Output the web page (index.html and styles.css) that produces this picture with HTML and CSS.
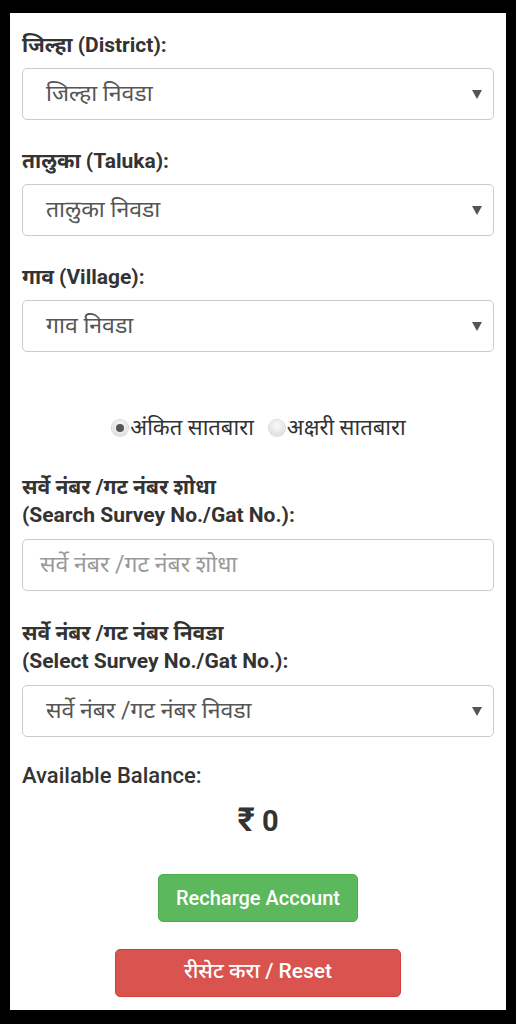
FILE: index.html
```html
<!DOCTYPE html>
<html lang="mr">
<head>
<meta charset="utf-8">
<title>सातबारा</title>
<link rel="stylesheet" href="styles.css">
</head>
<body>
<div class="panel">
  <div class="group">
    <label class="label">जिल्हा (District):</label>
    <div class="select"><span>जिल्हा निवडा</span><span class="arrow"></span></div>
  </div>
  <div class="group">
    <label class="label">तालुका (Taluka):</label>
    <div class="select"><span>तालुका निवडा</span><span class="arrow"></span></div>
  </div>
  <div class="group">
    <label class="label">गाव (Village):</label>
    <div class="select"><span>गाव निवडा</span><span class="arrow"></span></div>
  </div>

  <div class="radios">
    <span class="radio-item"><span class="radio checked"></span>अंकित सातबारा</span>
    <span class="radio-item"><span class="radio"></span>अक्षरी सातबारा</span>
  </div>

  <div class="group">
    <label class="label label-multi">सर्वे नंबर /गट नंबर शोधा<br>(Search Survey No./Gat No.):</label>
    <div class="input"><span class="placeholder">सर्वे नंबर /गट नंबर शोधा</span></div>
  </div>
  <div class="group group-last">
    <label class="label label-multi">सर्वे नंबर /गट नंबर निवडा<br>(Select Survey No./Gat No.):</label>
    <div class="select"><span>सर्वे नंबर /गट नंबर निवडा</span><span class="arrow"></span></div>
  </div>

  <div class="balance-label">Available Balance:</div>
  <div class="balance"><span class="rupee">₹</span> 0</div>

  <div class="actions">
    <button class="btn btn-green">Recharge Account</button>
    <button class="btn btn-red">रीसेट करा / Reset</button>
  </div>
</div>
</body>
</html>
```

FILE: styles.css
```css
html, body {
  margin: 0;
  padding: 0;
  background: #000;
}
body {
  padding: 13px 10px 14px 10px;
  font-family: Roboto, "Noto Sans Devanagari", "Noto Sans", sans-serif;
  color: #333;
}
.panel {
  background: #fff;
  height: 997px;
  box-sizing: border-box;
  padding: 19px 12px 0 12px;
}
.group {
  margin-bottom: 28px;
}
.group-last {
  margin-bottom: 26px;
}
.label {
  display: block;
  font-size: 21px;
  font-weight: 700;
  line-height: 26px;
  margin-bottom: 10px;
  color: #333;
}
.label-multi {
  line-height: 28px;
}
.select, .input {
  height: 52px;
  box-sizing: border-box;
  border: 1px solid #ccc;
  border-radius: 5px;
  display: flex;
  align-items: center;
  font-size: 23px;
  line-height: 30px;
  color: #555;
  background: #fff;
}
.select {
  padding: 0 11px 0 23px;
  justify-content: space-between;
}
.input {
  padding: 0 17px;
}
.placeholder {
  color: #999;
}
.arrow {
  width: 0;
  height: 0;
  border-left: 5px solid transparent;
  border-right: 5px solid transparent;
  border-top: 9px solid #555;
}
.radios {
  margin-top: -28px;
  padding-top: 63px;
  margin-bottom: 32px;
  display: flex;
  justify-content: center;
  gap: 15px;
  font-size: 22px;
  line-height: 26px;
  color: #333;
  padding-left: 2px;
}
.radio-item {
  display: inline-flex;
  align-items: center;
}
.radio {
  width: 16px;
  height: 16px;
  border-radius: 50%;
  background: radial-gradient(circle at 50% 35%, #fafafa 0%, #e2e2e2 70%, #cfcfcf 100%);
  box-shadow: 0 0 0 1px #d6d6d6;
  margin-right: 2px;
  position: relative;
}
.radio.checked::after {
  content: "";
  position: absolute;
  left: 4px;
  top: 4px;
  width: 8px;
  height: 8px;
  border-radius: 50%;
  background: #555;
}
.balance-label {
  font-size: 22px;
  line-height: 26px;
  color: #333;
  font-weight: 500;
}
.balance {
  text-align: center;
  font-size: 29px;
  font-weight: 700;
  line-height: 36px;
  height: 36px;
  margin-top: 14px;
  color: #333;
}
.rupee {
  font-size: 33px;
  line-height: 1;
}
.actions {
  display: flex;
  flex-direction: column;
  align-items: center;
  margin-top: 35px;
  gap: 27px;
}
.btn {
  height: 48px;
  border: none;
  border-radius: 5px;
  color: #fff;
  font-family: Roboto, "Noto Sans Devanagari", "Noto Sans", sans-serif;
  font-size: 20px;
  font-weight: 500;
  padding: 0;
}
.btn-green {
  width: 200px;
  background: #5cb85c;
  border: 1px solid #4cae4c;
}
.btn-red {
  width: 286px;
  background: #d9534f;
  border: 1px solid #d43f3a;
  font-size: 21px;
}
```
